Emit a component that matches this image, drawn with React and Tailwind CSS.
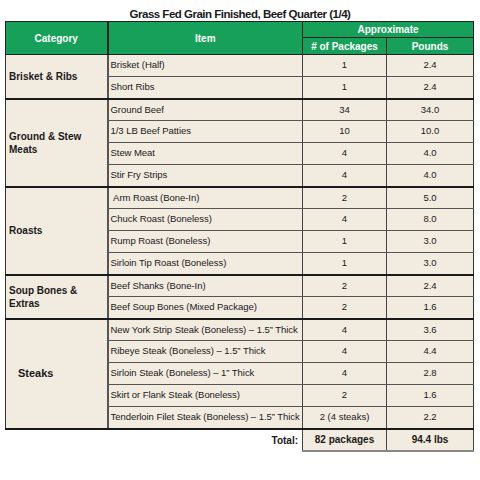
import React from "react";

const groups = [
  {
    name: ["Brisket & Ribs"],
    rows: [
      ["Brisket (Half)", "1", "2.4"],
      ["Short Ribs", "1", "2.4"],
    ],
  },
  {
    name: ["Ground & Stew", "Meats"],
    rows: [
      ["Ground Beef", "34", "34.0"],
      ["1/3 LB Beef Patties", "10", "10.0"],
      ["Stew Meat", "4", "4.0"],
      ["Stir Fry Strips", "4", "4.0"],
    ],
  },
  {
    name: ["Roasts"],
    rows: [
      ["\u00a0Arm Roast (Bone-In)", "2", "5.0"],
      ["Chuck Roast (Boneless)", "4", "8.0"],
      ["Rump Roast (Boneless)", "1", "3.0"],
      ["Sirloin Tip Roast (Boneless)", "1", "3.0"],
    ],
  },
  {
    name: ["Soup Bones &", "Extras"],
    rows: [
      ["Beef Shanks (Bone-In)", "2", "2.4"],
      ["Beef Soup Bones (Mixed Package)", "2", "1.6"],
    ],
  },
  {
    name: ["Steaks"],
    big: true,
    rows: [
      ["New York Strip Steak (Boneless) \u2013 1.5\u201d Thick", "4", "3.6"],
      ["Ribeye Steak (Boneless) \u2013 1.5\u201d Thick", "4", "4.4"],
      ["Sirloin Steak (Boneless) \u2013 1\u201d Thick", "4", "2.8"],
      ["Skirt or Flank Steak (Boneless)", "2", "1.6"],
      ["Tenderloin Filet Steak (Boneless) \u2013 1.5\u201d Thick", "2 (4 steaks)", "2.2"],
    ],
  },
];

export default function App() {
  return (
    <div
      className="w-[480px] h-[480px] bg-white text-[#1a1a1a]"
      style={{ fontFamily: '"Liberation Sans", Arial, sans-serif' }}
    >
      <div className="pt-[7px] text-center text-[11.5px] font-bold leading-[14px] tracking-[-0.5px]">
        Grass Fed Grain Finished, Beef Quarter (1/4)
      </div>
      <table className="ml-[5px] border-collapse table-fixed w-[468px]">
        <colgroup>
          <col className="w-[102px]" />
          <col className="w-[195px]" />
          <col className="w-[84px]" />
          <col className="w-[87px]" />
        </colgroup>
        <thead>
          <tr className="h-[16px] bg-[#17a05a] text-white font-bold text-[10px]">
            <th rowSpan={2} className="border border-[#222] border-r-2 text-center font-bold">
              Category
            </th>
            <th rowSpan={2} className="border border-[#222] text-center font-bold">
              Item
            </th>
            <th colSpan={2} className="border border-[#222] text-center font-bold leading-[15px]">
              Approximate
            </th>
          </tr>
          <tr className="h-[17px] bg-[#17a05a] text-white text-[10px]">
            <th className="border border-[#222] text-center font-bold leading-[15px]">
              # of Packages
            </th>
            <th className="border border-[#222] text-center font-bold leading-[15px]">
              Pounds
            </th>
          </tr>
        </thead>
        <tbody className="bg-[#f2ebe0] text-[9.5px]">
          {groups.map((g, gi) =>
            g.rows.map((r, ri) => {
              const last = ri === g.rows.length - 1;
              const bottom = last ? "border-b-2 border-b-[#1a1a1a]" : "border-b border-b-[#555]";
              return (
                <tr key={gi + "-" + ri} className="h-[22px]">
                  {ri === 0 && (
                    <td
                      rowSpan={g.rows.length}
                      className={
                        "border-l border-l-[#333] border-r-2 border-r-[#555] border-b-2 border-b-[#1a1a1a] align-middle font-bold leading-[13px] " +
                        (g.big ? "pl-[12px] text-[11px]" : "pl-[3px] text-[10px]")
                      }
                    >
                      {g.name.map((n, i) => (
                        <div key={i}>{n}</div>
                      ))}
                    </td>
                  )}
                  <td className={"pl-[2px] border-r border-r-[#444] whitespace-nowrap tracking-[-0.05px] " + bottom}>
                    {r[0]}
                  </td>
                  <td className={"text-center border-r border-r-[#444] " + bottom}>{r[1]}</td>
                  <td className={"text-center border-r border-r-[#333] " + bottom}>{r[2]}</td>
                </tr>
              );
            })
          )}
          <tr className="h-[22px] bg-white">
            <td></td>
            <td className="text-right pr-[4px] font-bold text-[10px]">Total:</td>
            <td className="text-center font-bold text-[10px] bg-[#f2ebe0] border-r border-r-[#444] border-l border-l-[#444] border-b-2 border-b-[#888]">
              82 packages
            </td>
            <td className="text-center font-bold text-[10px] bg-[#f2ebe0] border-r border-r-[#444] border-b-2 border-b-[#888]">
              94.4 lbs
            </td>
          </tr>
        </tbody>
      </table>
    </div>
  );
}
